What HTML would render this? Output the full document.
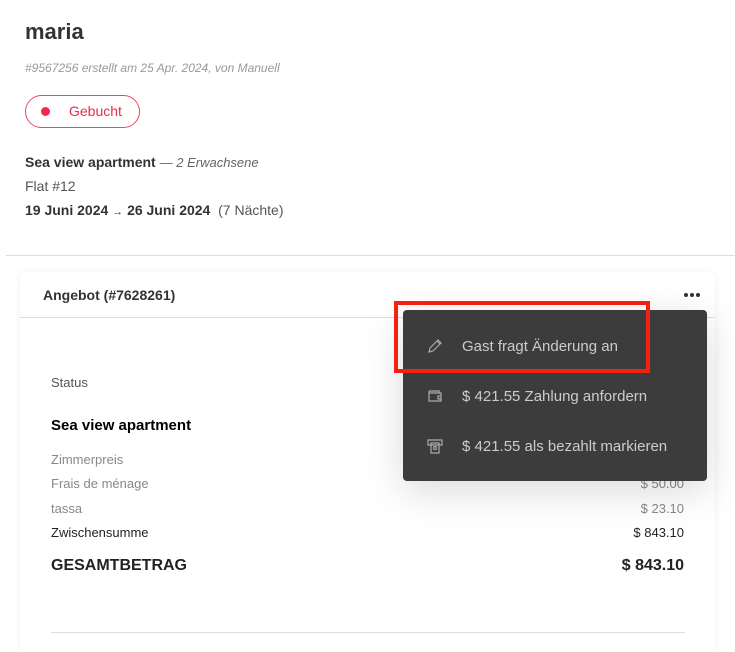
<html><head><style>
body{margin:0;width:735px;height:635px;background:#fff;font-family:"Liberation Sans",sans-serif;color:#333;position:relative;overflow:hidden}
.a{position:absolute;white-space:nowrap}
.d{position:absolute;top:293px;width:4px;height:4px;border-radius:50%;background:#333}
</style></head><body>
<div class="a" style="left:25px;top:19px;font-size:22px;font-weight:bold;color:#333">maria</div>
<div class="a" style="left:25px;top:61px;font-size:12px;font-style:italic;color:#999">#9567256 erstellt am 25 Apr. 2024, von Manuell</div>
<div class="a" style="left:25px;top:95px;width:115px;height:33px;border:1px solid #f0475e;border-radius:17px;box-sizing:border-box"></div>
<div class="a" style="left:41px;top:107px;width:9px;height:9px;border-radius:50%;background:#f2284a"></div>
<div class="a" style="left:69px;top:103px;font-size:14px;color:#f2284a">Gebucht</div>
<div class="a" style="left:25px;top:154px;font-size:14px"><b>Sea view apartment</b> <span style="color:#666;font-style:italic;font-size:13px">— 2 Erwachsene</span></div>
<div class="a" style="left:25px;top:178px;font-size:14px;color:#555">Flat #12</div>
<div class="a" style="left:25px;top:202px;font-size:14px"><b>19 Juni 2024</b> <span style="font-size:11px">→</span> <b>26 Juni 2024</b> &nbsp;<span style="color:#555">(7 Nächte)</span></div>
<div class="a" style="left:6px;top:255px;width:729px;height:1px;background:#ddd"></div>
<div class="a" style="left:20px;top:272px;width:695px;height:380px;background:#fff;border-radius:6px;box-shadow:0 0 8px rgba(0,0,0,.06)"></div>
<div class="a" style="left:43px;top:287px;font-size:14px;font-weight:bold">Angebot (#7628261)</div>
<div class="d" style="left:684px"></div><div class="d" style="left:690px"></div><div class="d" style="left:696px"></div>
<div class="a" style="left:20px;top:317px;width:695px;height:1px;background:#ddd"></div>
<div class="a" style="left:51px;top:375px;font-size:13px;color:#555">Status</div>
<div class="a" style="left:51px;top:417px;font-size:15px;font-weight:900;color:#000">Sea view apartment</div>
<div class="a" style="left:51px;top:452px;font-size:13px;color:#888">Zimmerpreis</div>
<div class="a" style="left:51px;top:476px;font-size:13px;color:#888">Frais de ménage</div>
<div class="a" style="left:51px;top:501px;font-size:13px;color:#888">tassa</div>
<div class="a" style="left:51px;top:525px;font-size:13px;color:#222">Zwischensumme</div>
<div class="a" style="right:51px;top:476px;font-size:13px;color:#888">$ 50.00</div>
<div class="a" style="right:51px;top:501px;font-size:13px;color:#888">$ 23.10</div>
<div class="a" style="right:51px;top:525px;font-size:13px;color:#222">$ 843.10</div>
<div class="a" style="left:51px;top:557px;font-size:16px;font-weight:900;color:#222">GESAMTBETRAG</div>
<div class="a" style="right:51px;top:557px;font-size:16px;font-weight:900;color:#222">$ 843.10</div>
<div class="a" style="left:51px;top:632px;width:634px;height:1px;background:#ddd"></div>
<div class="a" style="left:403px;top:310px;width:304px;height:171px;background:#3c3c3c;border-radius:4px;box-shadow:0 10px 40px rgba(0,0,0,.15)"></div>
<svg class="a" style="left:427px;top:338px" width="16" height="16" viewBox="0 0 16 16" fill="none" stroke="#aaa" stroke-width="1.2"><path d="M2 14l1-4 8-8 3 3-8 8z M10 3l3 3"/></svg>
<div class="a" style="left:462px;top:338px;font-size:15px;color:#ccc">Gast fragt Änderung an</div>
<svg class="a" style="left:427px;top:389px" width="16" height="14" viewBox="0 0 16 14" fill="none" stroke="#aaa" stroke-width="1.2"><path d="M2 2h10v2M2 2v10h12V4H2M11 7h3v3h-3z"/></svg>
<div class="a" style="left:462px;top:388px;font-size:15px;color:#ccc">$ 421.55 Zahlung anfordern</div>
<svg class="a" style="left:427px;top:438px" width="16" height="16" viewBox="0 0 16 16" fill="none" stroke="#aaa" stroke-width="1.2"><path d="M1 2h14v5H1z M4 5h8v10H4z"/><circle cx="8" cy="10" r="1.5"/></svg>
<div class="a" style="left:462px;top:438px;font-size:15px;color:#ccc">$ 421.55 als bezahlt markieren</div>
<div class="a" style="left:394px;top:301px;width:256px;height:72px;border:4px solid #f5200f;box-sizing:border-box"></div>
</body></html>
